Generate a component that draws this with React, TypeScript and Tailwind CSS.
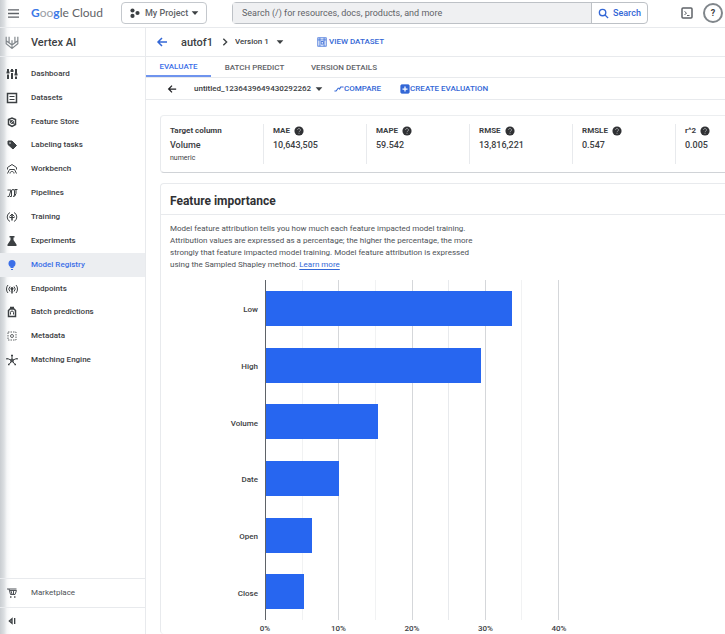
import type { ReactNode } from "react";

type IconProps = { children: ReactNode; className?: string };

function Icon({ children, className = "size-3" }: IconProps) {
  return (
    <svg
      viewBox="0 0 24 24"
      fill="none"
      stroke="currentColor"
      strokeWidth="2"
      aria-hidden="true"
      className={`shrink-0 ${className}`}
    >
      {children}
    </svg>
  );
}

const Caret = ({ className = "size-3" }: { className?: string }) => (
  <Icon className={className}>
    <path d="M4 8h16l-8 9z" fill="currentColor" stroke="none" />
  </Icon>
);

const ArrowLeft = ({ className = "size-3" }: { className?: string }) => (
  <Icon className={className}>
    <path d="M22 12H4M12 4l-8 8 8 8" strokeWidth="3" />
  </Icon>
);

const HelpDot = () => (
  <button type="button" aria-label="Help" className="text-[#303134]">
    <Icon className="size-[10px]">
      <circle cx="12" cy="12" r="11" fill="currentColor" stroke="none" />
      <path d="M8.5 9.5a3.5 3.5 0 1 1 5.5 2.8c-1.500 1-2 1.500-2 2.700M12 17v2" stroke="#a9acb0" />
    </Icon>
  </button>
);

const navItems: { label: string; icon: ReactNode; active?: boolean }[] = [
  {
    label: "Dashboard",
    icon: <path d="M4 2v7M4 13v9M12 2v4M12 10v12M20 2v11M20 17v5M1 9h6M9 6h6M17 13h6" strokeWidth="4" />,
  },
  {
    label: "Datasets",
    icon: (
      <>
        <rect x="3" y="3" width="18" height="18" strokeWidth="3" />
        <path d="M7 9h10M7 15h10" />
      </>
    ),
  },
  {
    label: "Feature Store",
    icon: (
      <>
        <path d="M5 7l7-3 7 3v10l-7 4-7-4z" strokeWidth="3" />
        <circle cx="12" cy="12" r="3" />
        <path d="M6 7l12 10" />
      </>
    ),
  },
  {
    label: "Labeling tasks",
    icon: (
      <>
        <path d="M4 4h8l9 9-7 7-10-9z" fill="currentColor" />
        <circle cx="8" cy="8" r="1.500" fill="#fff" stroke="none" />
      </>
    ),
  },
  {
    label: "Workbench",
    icon: (
      <>
        <path d="M3 13V9l9-6 9 6v4" />
        <path d="M3 21l4-8h10l4 8M8 21c0-3 2-4 4-4s4 1 4 4" />
      </>
    ),
  },
  {
    label: "Pipelines",
    icon: <path d="M3 6h7L6 19H3M8 19h3V8a3 3 0 0 1 6 0v8a3 3 0 0 1-3 3M17 19l3-6V5M17 5h6" />,
  },
  {
    label: "Training",
    icon: (
      <>
        <path d="M8 3a10 10 0 0 0 0 18M16 3a10 10 0 0 1 0 18" />
        <path d="M12 6v13" strokeWidth="3" />
        <path d="M7 11l5-5 5 5M7 13h10" />
      </>
    ),
  },
  {
    label: "Experiments",
    icon: <path d="M7 2h10v3h-2v5l6 9v3H3v-3l6-9V5H7z" fill="currentColor" stroke="none" />,
  },
  {
    label: "Model Registry",
    active: true,
    icon: (
      <>
        <circle cx="12" cy="9" r="7" fill="currentColor" stroke="none" />
        <path d="M9 14h6v4H9zM10 20h4v2h-4z" fill="currentColor" stroke="none" />
      </>
    ),
  },
  {
    label: "Endpoints",
    icon: (
      <>
        <path d="M4 4a12 12 0 0 0 0 16M20 4a12 12 0 0 1 0 16M8 7a7 7 0 0 0 0 10M16 7a7 7 0 0 1 0 10" />
        <path d="M12 12v9" strokeWidth="3" />
        <circle cx="12" cy="11" r="3" fill="currentColor" stroke="none" />
      </>
    ),
  },
  {
    label: "Batch predictions",
    icon: (
      <>
        <path d="M5 21V9l3-3h8l3 3v12zM8 3h8" strokeWidth="3" />
        <path d="M9 17v-4a3 3 0 0 1 6 0v4" />
      </>
    ),
  },
  {
    label: "Metadata",
    icon: (
      <g opacity="0.8">
        <rect x="4" y="4" width="16" height="16" strokeDasharray="3 2" />
        <circle cx="12" cy="12" r="3" />
      </g>
    ),
  },
  {
    label: "Matching Engine",
    icon: (
      <>
        <path d="M12 13V3M12 13L3 9M12 13l9-4M12 13l-6 8M12 13l6 8" />
        <circle cx="12" cy="13" r="3" />
        <path d="M10 3h4M2 8v3M22 8v3M4 21h3M17 21h3" strokeWidth="3" />
      </>
    ),
  },
];

const metrics = [
  { name: "MAE", value: "10,643,505" },
  { name: "MAPE", value: "59.542" },
  { name: "RMSE", value: "13,816,221" },
  { name: "RMSLE", value: "0.547" },
  { name: "r^2", value: "0.005" },
];

const features = [
  { name: "Low", percent: 33.6 },
  { name: "High", percent: 29.4 },
  { name: "Volume", percent: 15.3 },
  { name: "Date", percent: 10 },
  { name: "Open", percent: 6.3 },
  { name: "Close", percent: 5.2 },
];

const axisMax = 40;
const gridColors = [
  "border-[#5f6368]",
  "border-[#f1f2f3]",
  "border-[#d5d7da]",
  "border-[#f1f2f3]",
  "border-[#d5d7da]",
  "border-[#e8eaed]",
  "border-[#d5d7da]",
  "border-[#f1f2f3]",
];

function TopBar() {
  return (
    <header className="flex h-7 shrink-0 items-center border-b border-[#e8eaed] pb-px pl-2">
      <button type="button" aria-label="Navigation menu" className="text-[#5f6368]">
        <Icon className="size-[11px]">
          <path d="M0 4h24M0 12h24M0 20h24" strokeWidth="3" />
        </Icon>
      </button>
      <a href="#" className="ml-3 w-[90px] whitespace-nowrap font-['Lato',sans-serif] text-[12px] text-[#5f6368]">
        <span className="font-bold text-[#3b78e7]">G</span>
        <span className="text-[#9aa0a6]">oo</span>
        <span className="font-bold text-[#3b78e7]">g</span>le Cloud
      </a>
      <button
        type="button"
        className="flex h-[22px] w-[86px] shrink-0 items-center rounded-sm border border-[#c4c8cd] pl-2 text-[9px] font-medium text-[#5f6368]"
      >
        <Icon className="size-[10px] text-[#3c4043]">
          <g fill="currentColor" stroke="none">
            <circle cx="6" cy="6" r="5" />
            <circle cx="18" cy="12" r="5" />
            <circle cx="6" cy="19" r="5" />
          </g>
        </Icon>
        <span className="ml-[5px] flex-1 whitespace-nowrap text-left">My Project</span>
        <Caret className="mr-[6px] size-[10px] text-[#3c4043]" />
      </button>
      <form className="ml-[25px] flex h-[22px] w-[416px] min-w-0 rounded-sm border border-[#bdc1c6]">
        <input
          type="search"
          aria-label="Search"
          placeholder="Search (/) for resources, docs, products, and more"
          className="min-w-0 flex-1 bg-[#eff0f2] px-[9px] text-[9px] text-[#3c4043] outline-none placeholder:text-[#5f6368]"
        />
        <button
          type="button"
          className="flex w-[56px] items-center gap-1 border-l border-[#bdc1c6] pl-[6px] text-[9px] font-medium text-[#3367d6]"
        >
          <Icon className="size-[11px]">
            <circle cx="10" cy="10" r="7" strokeWidth="3" />
            <path d="M15 15l7 7" strokeWidth="3" />
          </Icon>
          Search
        </button>
      </form>
      <div className="ml-auto flex shrink-0 items-center gap-[10px] pr-[2px] text-[#5f6368]">
        <button type="button" aria-label="Activate Cloud Shell">
          <Icon className="size-3">
            <rect x="2" y="2" width="20" height="20" rx="2" strokeWidth="3" />
            <path d="M7 9l4 3-4 4M12 17h5" />
          </Icon>
        </button>
        <button
          type="button"
          aria-label="Help menu"
          className="grid size-5 place-items-center rounded-full border-2 border-[#80868b] text-[9px] font-bold text-[#3c4043]"
        >
          ?
        </button>
      </div>
    </header>
  );
}

function Sidebar() {
  return (
    <aside className="flex w-[146px] shrink-0 flex-col border-r border-[#e8eaed]">
      <div className="flex h-[29px] shrink-0 items-center gap-3 border-b border-[#e8eaed] pl-[5px]">
        <Icon className="size-[14px] text-[#80868b]">
          <path d="M2 3v12l10 8 10-8V3M7 3v10l5 4 5-4V3M12 9v14M2 10l10 7 10-7" strokeWidth="2" />
        </Icon>
        <h1 className="text-[11px] font-medium text-[#3c4043]">Vertex AI</h1>
      </div>
      <nav className="mt-[5px] flex h-[310px] shrink-0 flex-col text-[8px] font-medium">
        {navItems.map((item) => (
          <a
            key={item.label}
            href="#"
            aria-current={item.active ? "page" : undefined}
            className={`flex flex-1 items-center gap-[13px] pl-[6px] ${
              item.active ? "bg-[#eceef1] text-[#3b6fe8]" : "text-[#3c4043]"
            }`}
          >
            <Icon>{item.icon}</Icon>
            {item.label}
          </a>
        ))}
      </nav>
      <a
        href="#"
        className="mt-auto flex h-[30px] shrink-0 items-center gap-[13px] border-y border-[#e8eaed] pl-[6px] text-[8px] text-[#4d5156]"
      >
        <Icon>
          <path d="M2 4h4l3 11h9l3-8H8M6 4h15M10 8l2 6M15 8v6" />
          <path d="M8 20h3M16 20h3" strokeWidth="3" />
        </Icon>
        Marketplace
      </a>
      <div className="flex h-[26px] shrink-0 items-center pl-2">
        <button type="button" aria-label="Collapse menu" className="text-[#3c4043]">
          <Icon className="size-2">
            <path d="M12 5l-8 7 8 7zM20 3v18" strokeWidth="4" />
          </Icon>
        </button>
      </div>
    </aside>
  );
}

function PageHeader() {
  return (
    <>
      <div className="flex h-[29px] shrink-0 items-center border-b border-[#e8eaed] pl-[10px]">
        <button type="button" aria-label="Back" className="text-[#3367d6]">
          <ArrowLeft />
        </button>
        <h2 className="ml-[13px] w-[40px] text-[11px] font-medium text-[#3c4043]">autof1</h2>
        <Icon className="size-2 text-[#3c4043]">
          <path d="M7 2l10 10L7 22" strokeWidth="4" />
        </Icon>
        <div className="ml-[6px] grid items-center">
          <select
            aria-label="Version"
            className="col-start-1 row-start-1 w-[50px] appearance-none bg-transparent text-[8px] font-medium text-[#3c4043]"
          >
            <option>Version 1</option>
          </select>
          <Caret className="pointer-events-none col-start-1 row-start-1 size-[10px] justify-self-end text-[#3c4043]" />
        </div>
        <a href="#" className="ml-8 flex items-center gap-[2px] whitespace-nowrap text-[8px] font-medium text-[#3367d6]">
          <Icon className="size-[10px]">
            <rect x="2" y="2" width="20" height="20" />
            <path d="M2 7h20M7 2v20M17 2v20" />
            <rect x="10" y="11" width="5" height="6" />
          </Icon>
          VIEW DATASET
        </a>
      </div>
      <nav className="flex h-[21px] shrink-0 border-b border-[#e8eaed] text-[8px] font-medium text-[#5f6368]">
        <a href="#" aria-current="page" className="flex w-[65px] items-center justify-center border-b-2 border-[#6f94ee] pt-[2px] text-[#3b6fe8]">
          EVALUATE
        </a>
        <a href="#" className="flex w-[87px] items-center justify-center pt-px">
          BATCH PREDICT
        </a>
        <a href="#" className="flex w-[92px] items-center justify-center pt-px">
          VERSION DETAILS
        </a>
      </nav>
      <div className="flex h-[22px] shrink-0 items-center border-b border-[#e8eaed] pt-px pl-[21px] text-[8px] font-medium text-[#3367d6]">
        <button type="button" aria-label="Previous evaluation" className="text-[#202124]">
          <ArrowLeft className="size-[10px]" />
        </button>
        <div className="ml-[17px] grid items-center text-[#3c4043]">
          <select aria-label="Evaluation" className="col-start-1 row-start-1 w-[130px] appearance-none bg-transparent">
            <option>untitled_1236439649430292262</option>
          </select>
          <Caret className="pointer-events-none col-start-1 row-start-1 size-[10px] justify-self-end" />
        </div>
        <button type="button" className="ml-[10px] flex items-center">
          <Icon className="size-[10px]">
            <path d="M1 17h4l5-7h3M13 13l3-6h7" strokeWidth="2.500" />
          </Icon>
          COMPARE
        </button>
        <button type="button" className="ml-[19px] flex items-center whitespace-nowrap">
          <Icon className="size-[10px]">
            <rect x="2" y="2" width="20" height="20" rx="2" fill="currentColor" />
            <path d="M12 6v12M6 12h12" stroke="#fff" strokeWidth="3" />
          </Icon>
          CREATE EVALUATION
        </button>
      </div>
    </>
  );
}

function MetricsCard() {
  return (
    <section className="flex h-[58px] shrink-0 overflow-hidden rounded-l-sm border-y border-l border-t-[#eceef0] border-b-[#d0d3d7] border-l-[#e8eaed] py-2 text-[#3c4043]">
      <div className="w-[102px] shrink-0 pl-[9px]">
        <p className="text-[8px] leading-[14px] font-bold">Target column</p>
        <p className="text-[9px] leading-[14px] font-medium">Volume</p>
        <p className="text-[7px] leading-3">numeric</p>
      </div>
      {metrics.map((metric) => (
        <div key={metric.name} className="w-[103px] shrink-0 border-l border-[#e8eaed] pl-[9px]">
          <p className="flex h-[14px] items-center gap-1 text-[8px] font-bold">
            {metric.name}
            <HelpDot />
          </p>
          <p className="text-[9px] leading-[14px] font-medium">{metric.value}</p>
        </div>
      ))}
    </section>
  );
}

function ImportanceChart() {
  return (
    <div className="mt-[9px] flex text-[8px] font-medium text-[#3c4043]">
      <div className="flex h-[342px] w-[97px] flex-col pt-[2px]">
        {features.map((feature) => (
          <span key={feature.name} className="flex flex-1 items-center justify-end">
            {feature.name}
          </span>
        ))}
      </div>
      <div className="ml-[7px] w-[294px]">
        <div className="grid h-[340px]">
          <div className="col-start-1 row-start-1 grid grid-cols-8 border-r border-[#d5d7da]">
            {gridColors.map((color, index) => (
              <div key={index} className={`border-l ${color}`} />
            ))}
          </div>
          <div className="col-start-1 row-start-1 flex flex-col pl-px">
            {features.map((feature) => (
              <div key={feature.name} className="flex flex-1 items-center">
                <div className="h-[35px] bg-[#2766f0]" style={{ width: `${(feature.percent / axisMax) * 100}%` }} />
              </div>
            ))}
          </div>
        </div>
        <div className="-mx-9 mt-[3px] flex justify-between">
          {[0, 10, 20, 30, 40].map((tick) => (
            <span key={tick} className="w-[72px] text-center leading-[11px]">
              {tick}%
            </span>
          ))}
        </div>
      </div>
    </div>
  );
}

export default function App() {
  return (
    <div className="flex h-screen flex-col overflow-hidden bg-[linear-gradient(to_right,#c9cdd1_0px,#dcdfe2_4px,#f6f7f8_7px,#ffffff_11px)] font-['Roboto',sans-serif] leading-none">
      <TopBar />
      <div className="flex min-h-0 flex-1">
        <Sidebar />
        <main className="flex min-w-0 flex-1 flex-col">
          <PageHeader />
          <div className="min-h-0 flex-1 overflow-hidden pt-[15px] pl-[14px]">
            <MetricsCard />
            <section className="mt-[10px] rounded-l-sm border-t border-l border-[#e8eaed]">
              <h3 className="flex h-[31px] items-center border-b border-[#e8eaed] pt-1 pl-[9px] text-[12px] font-bold text-[#303134]">
                Feature importance
              </h3>
              <div className="pt-2 pl-[9px]">
                <p className="w-[308px] text-[8px] leading-3 text-[#4d5156]">
                  Model feature attribution tells you how much each feature impacted model training. Attribution
                  values are expressed as a percentage; the higher the percentage, the more strongly that feature
                  impacted model training. Model feature attribution is expressed using the Sampled Shapley method.{" "}
                  <a href="#" className="text-[#3367d6] underline underline-offset-2">
                    Learn more
                  </a>
                </p>
              </div>
              <ImportanceChart />
            </section>
          </div>
        </main>
      </div>
    </div>
  );
}
